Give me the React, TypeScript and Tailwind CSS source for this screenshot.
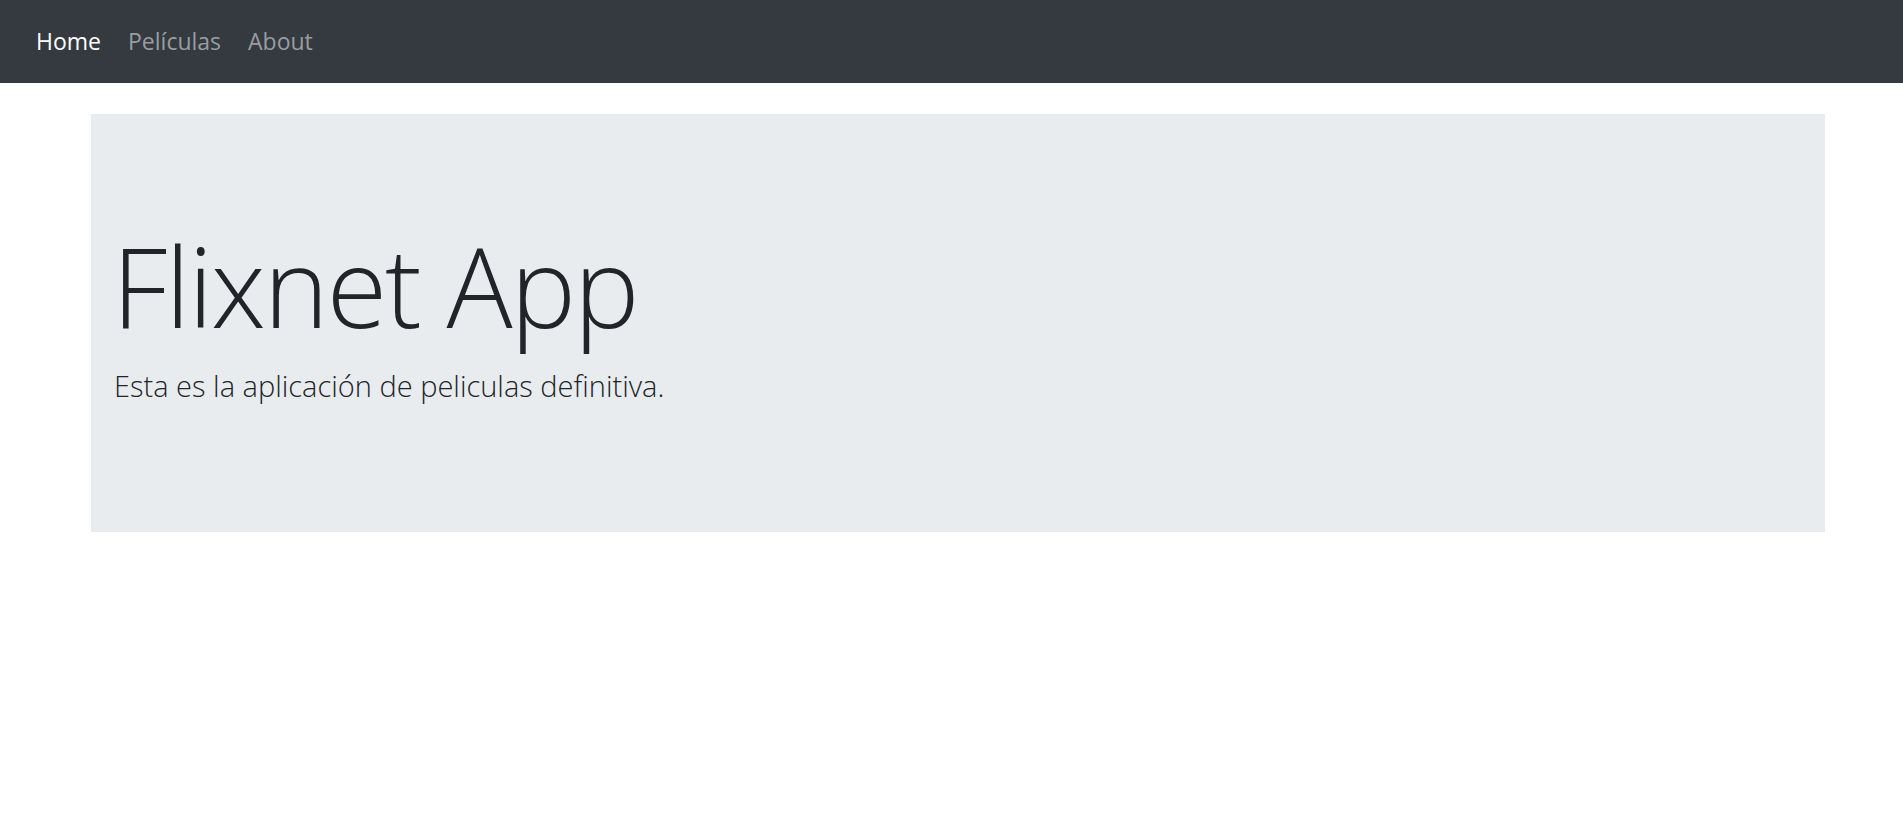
export default function App() {
  const links = [
    { label: "Home", active: true },
    { label: "Películas", active: false },
    { label: "About", active: false },
  ];

  return (
    <div className="min-h-screen bg-white font-['Open_Sans',sans-serif]">
      <nav className="flex h-[83px] items-center gap-[27px] bg-[#343a40] pb-[2px] pl-[36px]">
        {links.map((link) => (
          <a
            key={link.label}
            href="#"
            className={`text-[23px] leading-[36px] ${
              link.active ? "text-white" : "text-[#9a9da0]"
            }`}
          >
            {link.label}
          </a>
        ))}
      </nav>

      <section className="ml-[91px] mt-[31px] h-[418px] w-[1734px] bg-[#e9ecef] pl-[23px] pt-[105px]">
        <h1 className="-ml-[2px] text-[110px] leading-[1.2] font-light tracking-[-2px] text-[#212529]">
          Flixnet App
        </h1>
        <p className="mt-[13px] text-[29px] leading-[1.5] font-light text-[#212529]">
          Esta es la aplicación de peliculas definitiva.
        </p>
      </section>
    </div>
  );
}
